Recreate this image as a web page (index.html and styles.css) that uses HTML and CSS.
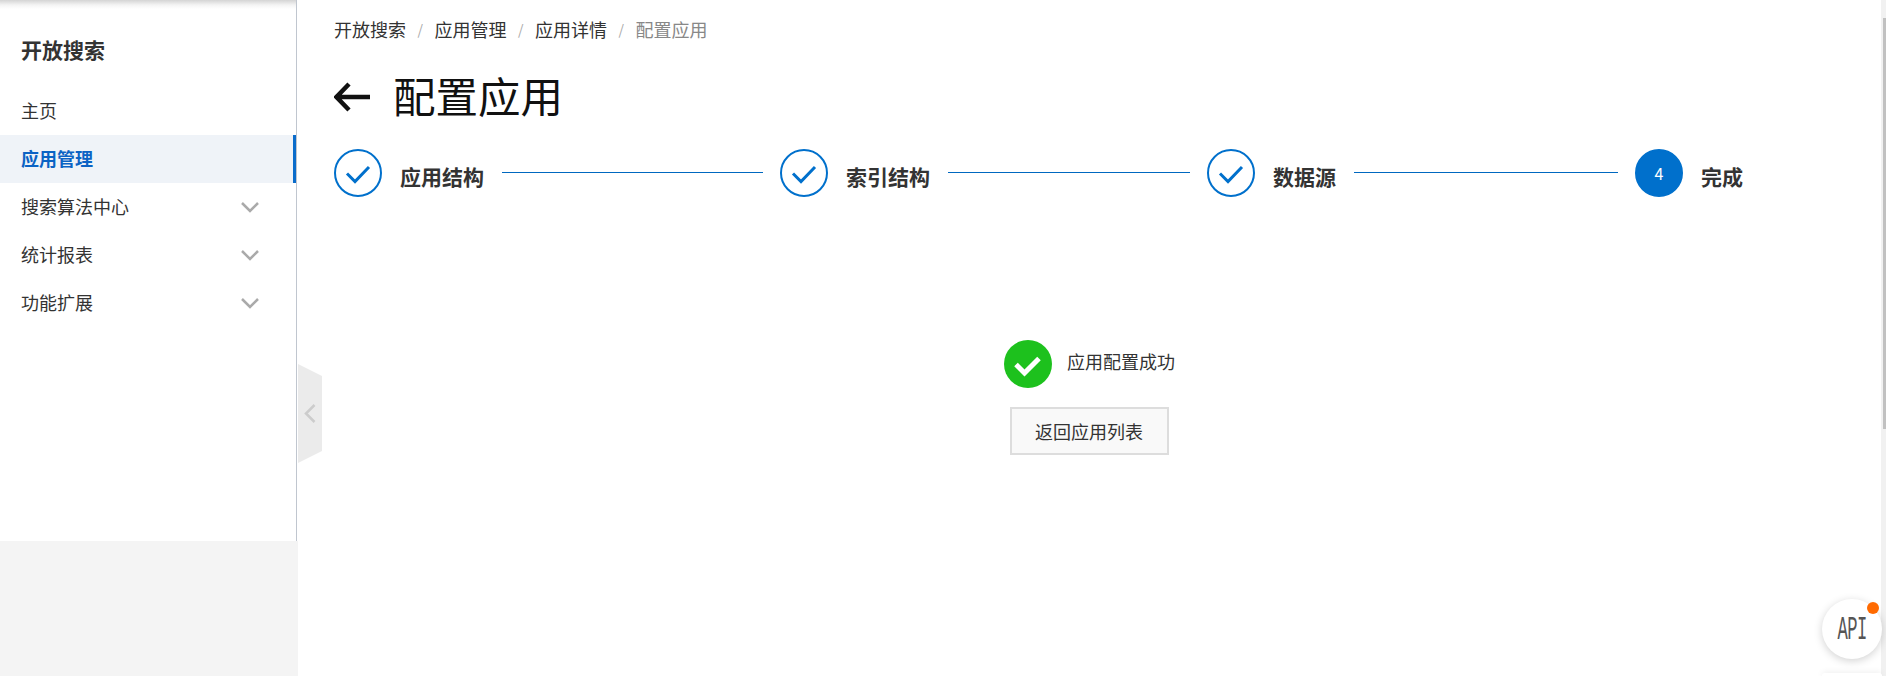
FILE: index.html
```html
<!DOCTYPE html>
<html lang="zh-CN">
<head>
<meta charset="utf-8">
<title>配置应用</title>
<link rel="stylesheet" href="styles.css">
</head>
<body>
<div class="app">
  <aside class="sidebar">
    <div class="side-panel">
      <div class="side-title">开放搜索</div>
      <nav class="menu">
        <div class="menu-item">主页</div>
        <div class="menu-item active">应用管理</div>
        <div class="menu-item">搜索算法中心<svg class="chev" viewBox="0 0 18 11"><path d="M1 1l8 8 8-8"/></svg></div>
        <div class="menu-item">统计报表<svg class="chev" viewBox="0 0 18 11"><path d="M1 1l8 8 8-8"/></svg></div>
        <div class="menu-item">功能扩展<svg class="chev" viewBox="0 0 18 11"><path d="M1 1l8 8 8-8"/></svg></div>
      </nav>
    </div>
    <div class="side-foot"></div>
    <div class="collapse">
      <svg class="collapse-bg" viewBox="0 0 24 99"><path d="M0 0L24 12V87L0 99Z"/></svg>
      <svg class="collapse-chev" viewBox="0 0 12 19"><path d="M10.5 1L2 9.5l8.5 8.5"/></svg>
    </div>
  </aside>
  <main class="main">
    <div class="crumbs">
      <span>开放搜索</span><i>/</i><span>应用管理</span><i>/</i><span>应用详情</span><i>/</i><span class="current">配置应用</span>
    </div>
    <div class="head">
      <svg class="back" viewBox="0 0 36 30"><path d="M36 15H3M15 2L2.500 15 15 28"/></svg>
      <h1>配置应用</h1>
    </div>
    <div class="steps">
      <div class="step step-a">
        <span class="circle"><svg viewBox="0 0 48 48"><path d="M13 24.500l8 8L35 18"/></svg></span>
        <b>应用结构</b><span class="line"></span>
      </div>
      <div class="step step-b">
        <span class="circle"><svg viewBox="0 0 48 48"><path d="M13 24.500l8 8L35 18"/></svg></span>
        <b>索引结构</b><span class="line"></span>
      </div>
      <div class="step step-c">
        <span class="circle"><svg viewBox="0 0 48 48"><path d="M13 24.500l8 8L35 18"/></svg></span>
        <b>数据源</b><span class="line"></span>
      </div>
      <div class="step">
        <span class="circle filled">4</span>
        <b>完成</b>
      </div>
    </div>
    <div class="result">
      <div class="result-msg">
        <svg class="ok" viewBox="0 0 48 48"><circle cx="24" cy="24" r="24"/><path d="M12 24.500l8.500 8.500L35 18.500"/></svg>
        <span>应用配置成功</span>
      </div>
      <button class="btn" type="button">返回应用列表</button>
    </div>
  </main>
  <div class="scrollbar"><div class="thumb"></div></div>
</div>
<div class="fab"><span class="fab-text">API</span><span class="fab-dot"></span></div>
<div class="fab-next"></div>
</body>
</html>
```
FILE: styles.css
```css
* { box-sizing: border-box; }
html, body { margin: 0; height: 100%; overflow: hidden; background: #fff; }
body {
  font-family: "Noto Sans CJK SC", "Liberation Sans", sans-serif;
  font-size: 18px;
  color: #333;
}
.app { display: flex; height: 676px; overflow: hidden; }

.sidebar { position: relative; width: 298px; flex: none; display: flex; flex-direction: column; }
.side-panel {
  height: 541px;
  width: 297px;
  border-right: 1px solid #c0c6cf;
  background: linear-gradient(#d4d4d4, #f4f4f4 5px, #fff 9px);
}
.side-foot { flex: 1; background: #f4f4f4; }
.side-title {
  height: 87px;
  padding: 34px 0 0 21px;
  font-size: 21px;
  line-height: 30px;
  font-weight: 700;
}
.menu-item {
  position: relative;
  display: flex;
  align-items: center;
  justify-content: space-between;
  height: 48px;
  padding: 0 37px 2px 21px;
  line-height: 46px;
}
.menu-item.active {
  font-weight: 700;
  color: #0b63c4;
  background: #eff3f8;
  border-right: 3px solid #0a6ccb;
  padding-right: 34px;
}
.chev { width: 18px; height: 11px; margin-top: 2px; fill: none; stroke: #aaa; stroke-width: 2.500; }

.collapse { position: absolute; left: 298px; top: 364px; width: 24px; height: 99px; }
.collapse-bg { display: block; width: 24px; height: 99px; fill: #ebebeb; }
.collapse-chev {
  position: absolute; left: 6px; top: 40px; width: 12px; height: 19px;
  fill: none; stroke: #ccc; stroke-width: 2.500;
}

.main { flex: 1; min-width: 0; padding: 14px 37px 0 36px; }
.crumbs { display: flex; align-items: center; height: 30px; line-height: 30px; }
.crumbs i { width: 28.500px; text-align: center; font-style: normal; font-size: 14px; color: #aaa; }
.crumbs .current { color: #888; }
.head { display: flex; align-items: center; height: 60px; margin-top: 21px; }
.back { width: 36px; height: 30px; margin-top: 3px; fill: none; stroke: #111; stroke-width: 4.500; }
h1 { margin: 0 0 0 23px; font-size: 42.500px; line-height: 60px; font-weight: 400; color: #111; }

.steps { display: flex; align-items: flex-start; margin-top: 24px; }
.step { display: flex; align-items: flex-start; flex: none; }
.step b { margin-left: 18px; margin-top: 11px; font-size: 21px; line-height: 32px; font-weight: 700; }
.circle {
  display: flex; align-items: center; justify-content: center;
  width: 48px; height: 48px; border-radius: 50%;
  border: 2px solid #0070cc; color: #fff; font-size: 16px;
}
.circle svg { width: 48px; height: 48px; flex: none; fill: none; stroke: #0070cc; stroke-width: 3; }
.circle.filled { background: #0070cc; }
.line { height: 1px; margin: 23px 17px 0 18px; background: #0068c0; }
.step-a .line { width: 261px; }
.step-b .line { width: 242px; }
.step-c .line { width: 264px; }

.result { display: flex; flex-direction: column; align-items: center; margin-top: 143px; }
.result-msg { display: flex; align-items: center; gap: 15px; height: 48px; width: 170px; flex: none; }
.result-msg span { white-space: nowrap; margin-top: -7px; }
.ok { width: 48px; height: 48px; flex: none; }
.ok circle { fill: #1dc11d; }
.ok path { fill: none; stroke: #fff; stroke-width: 5; }
.btn {
  width: 159px; height: 48px; margin-top: 19px;
  border: 2px solid #ddd; background: #f9f9f9;
  font: inherit; color: #333; padding: 0;
}

.scrollbar { width: 5px; flex: none; background: #f1f1f1; padding: 18px 0 0 2px; }
.thumb { height: 411px; background: #c1c1c1; }

.fab {
  position: absolute; left: 1822px; top: 599px; width: 60px; height: 60px;
  border-radius: 50%; background: #fff; box-shadow: 0 2px 8px rgba(0,0,0,.18);
  display: flex; align-items: center; justify-content: center;
}
.fab-text {
  font-family: "Liberation Mono", monospace; font-size: 33px; line-height: 30px;
  color: #555; transform: scaleX(.52); letter-spacing: -1px; margin-top: 3px;
}
.fab-dot { position: absolute; left: 45px; top: 3px; width: 12px; height: 12px; border-radius: 50%; background: #ff6a00; }
.fab-next {
  position: fixed; left: 1822px; top: 673px; width: 60px; height: 3px;
  border-radius: 30px 30px 0 0; background: #fff; box-shadow: 0 0 6px rgba(0,0,0,.12);
}
```
